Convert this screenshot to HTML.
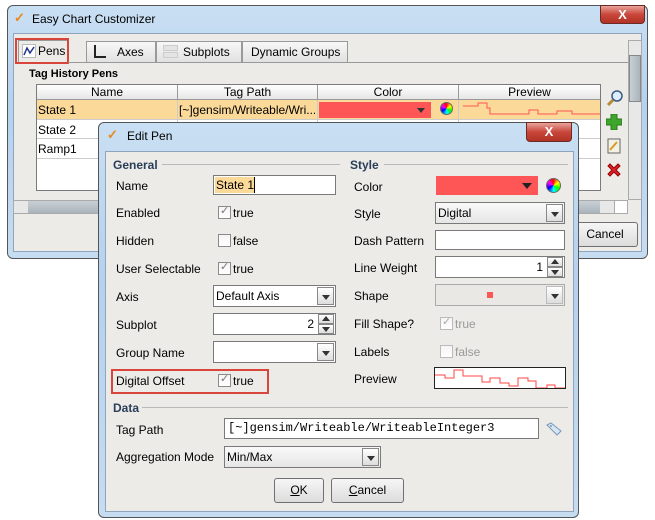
<!DOCTYPE html>
<html><head><style>
*{box-sizing:border-box;margin:0;padding:0}
body{width:655px;height:520px;background:#fff;position:relative;overflow:hidden;font-family:"Liberation Sans",sans-serif;font-size:12px;color:#000}
.a{position:absolute;white-space:nowrap}
.win{background:linear-gradient(#c9dff3,#b5d1ee 40%,#c6dcf1);border:1px solid #555;border-radius:6px}
.panel{background:#ecebe7;border:1px solid #8ea5bd}
.close{background:linear-gradient(#e8a39a,#c9463a 50%,#b13226);border:1px solid #6b2a22;border-radius:0 0 4px 4px;color:#fff;font-weight:bold;text-align:center;font-size:13px;line-height:17px}
.fld{background:#fff;border:1px solid #7a7a7a}
.cmb{background:linear-gradient(#fafafa,#e6e6e6);border:1px solid #7a7a7a}
.arr{position:absolute;right:1px;top:1px;bottom:1px;width:17px;border:1px solid #888;background:linear-gradient(#fff,#ddd)}
.arr:after{content:"";position:absolute;left:4px;top:7px;border:4px solid transparent;border-top:5px solid #333}
.cb{width:13px;height:13px;border:1px solid #8a8a8a;background:linear-gradient(#f4f4f4,#fff)}
.sec{color:#2a3e5a;font-weight:bold;font-size:12px}
.ln{height:1px;background:#b9b9b9}
.btn{border:1px solid #707070;border-radius:3px;background:linear-gradient(#f6f6f6,#dcdcdc);text-align:center;line-height:23px;font-size:12px}
.tab{border:1px solid #999;border-bottom:none;background:linear-gradient(#f7f7f7,#e0e0e0);height:22px;line-height:21px;font-size:12px}
.sp{position:absolute;right:1px;width:16px;height:10px;border:1px solid #888;background:linear-gradient(#fff,#ddd)}
.up:after{content:"";position:absolute;left:3px;top:1px;border:4px solid transparent;border-bottom:5px solid #333;border-top:0}
.dn:after{content:"";position:absolute;left:3px;top:2px;border:4px solid transparent;border-top:5px solid #333;border-bottom:0}
</style></head><body>

<!-- outer window -->
<div class="a win" style="left:7px;top:5px;width:641px;height:254px"></div>
<div class="a" style="left:14px;top:10px;color:#e8891c;font-weight:bold;font-size:13px">✓</div>
<div class="a" style="left:32px;top:12px;font-size:12px">Easy Chart Customizer</div>
<div class="a close" style="left:600px;top:5px;width:45px;height:19px">X</div>
<div class="a" style="left:13px;top:33px;width:629px;height:219px;background:#ecebe7;border:1px solid #8ea5bd"></div>
<!-- tabs -->
<div class="a tab" style="left:86px;top:41px;width:70px;padding-left:30px">Axes</div>
<div class="a" style="left:94px;top:45px;width:12px;height:13px;border-left:2px solid #222;border-bottom:2px solid #222"></div>
<div class="a tab" style="left:156px;top:41px;width:86px;padding-left:26px">Subplots</div>
<div class="a" style="left:163px;top:45px;width:15px;height:6px;background:#e4e4e4;border:1px solid #ccc"></div>
<div class="a" style="left:163px;top:52px;width:15px;height:6px;background:#e4e4e4;border:1px solid #ccc"></div>
<div class="a tab" style="left:242px;top:41px;width:106px;padding-left:8px">Dynamic Groups</div>
<div class="a tab" style="left:18px;top:40px;width:50px;height:23px;background:#ecebe7;padding-left:19px">Pens</div>
<svg class="a" style="left:22px;top:44px" width="14" height="14"><rect x="0.5" y="0.5" width="13" height="13" fill="#fff" stroke="#bbb"/><path d="M2 11 L5 4 L8 9 L12 3" stroke="#223388" stroke-width="1.5" fill="none"/></svg>
<div class="a" style="left:15px;top:38px;width:54px;height:26px;border:2px solid #d9453a"></div>
<div class="a" style="left:68px;top:62px;width:560px;height:1px;background:#999"></div>
<div class="a" style="left:29px;top:68px;font-weight:bold;font-size:11px">Tag History Pens</div>
<!-- table -->
<div class="a fld" style="left:36px;top:84px;width:565px;height:107px"></div>
<div class="a" style="left:37px;top:85px;width:563px;height:15px;background:linear-gradient(#fff,#e6e6e6);border-bottom:1px solid #999"></div>
<div class="a" style="left:37px;top:85px;width:140px;text-align:center">Name</div>
<div class="a" style="left:177px;top:85px;width:140px;text-align:center;border-left:1px solid #999;height:15px">Tag Path</div>
<div class="a" style="left:317px;top:85px;width:141px;text-align:center;border-left:1px solid #999;height:15px">Color</div>
<div class="a" style="left:458px;top:85px;width:142px;text-align:center;border-left:1px solid #999;height:15px">Preview</div>
<div class="a" style="left:37px;top:100px;width:563px;height:19px;background:#fbd999"></div>
<div class="a" style="left:177px;top:100px;width:1px;height:58px;background:#ccc"></div>
<div class="a" style="left:317px;top:100px;width:1px;height:58px;background:#ccc"></div>
<div class="a" style="left:458px;top:100px;width:1px;height:58px;background:#ccc"></div>
<div class="a" style="left:37px;top:119px;width:563px;height:1px;background:#ccc"></div>
<div class="a" style="left:37px;top:138px;width:563px;height:1px;background:#ccc"></div>
<div class="a" style="left:37px;top:158px;width:563px;height:1px;background:#ccc"></div>
<div class="a" style="left:38px;top:103px">State 1</div>
<div class="a" style="left:38px;top:123px">State 2</div>
<div class="a" style="left:38px;top:142px">Ramp1</div>
<div class="a" style="left:179px;top:103px;font-size:12px;width:136px;overflow:hidden">[~]gensim/Writeable/Wri...</div>
<div class="a" style="left:319px;top:102px;width:112px;height:16px;background:#fe5656"></div>
<div class="a" style="left:417px;top:108px;border:4px solid transparent;border-top:5px solid #333"></div>
<div class="a" style="left:440px;top:102px;width:13px;height:13px;border-radius:50%;background:conic-gradient(red,yellow,lime,cyan,blue,magenta,red);border:1px solid #666"></div>
<svg class="a" style="left:459px;top:100px" width="141" height="19"><path d="M4 6 H19 V3 H28 V8 H31 V14 H70 V10 H79 V14 H98 V11 H113 V14 H141" stroke="#f55" fill="none"/></svg>
<!-- right tool icons -->
<svg class="a" style="left:606px;top:89px" width="18" height="18"><circle cx="11" cy="7" r="5" fill="#dfeeff" stroke="#3a5a82" stroke-width="1.5"/><path d="M7 11 L2 16" stroke="#b88a3a" stroke-width="3"/></svg>
<svg class="a" style="left:606px;top:114px" width="16" height="16"><path d="M5 0h6v5h5v6h-5v5h-6v-5h-5v-6h5z" fill="#3fa52c" stroke="#2a7a1a"/></svg>
<svg class="a" style="left:606px;top:138px" width="16" height="16"><rect x="2" y="1" width="12" height="14" fill="#f2f2e4" stroke="#666"/><path d="M4 12 L11 4" stroke="#d89a2a" stroke-width="2"/></svg>
<svg class="a" style="left:606px;top:162px" width="16" height="16"><path d="M2 4 L4 2 L8 6 L12 2 L14 4 L10 8 L14 12 L12 14 L8 10 L4 14 L2 12 L6 8z" fill="#d8232a" stroke="#900"/></svg>
<!-- scrollbars -->
<div class="a" style="left:628px;top:40px;width:14px;height:160px;background:#e8e8e8;border:1px solid #aaa"></div>
<div class="a" style="left:629px;top:55px;width:12px;height:47px;background:linear-gradient(90deg,#c8d0d6,#aab4bb);border:1px solid #888"></div>
<div class="a" style="left:13px;top:200px;width:615px;height:14px;background:#e8e8e8;border:1px solid #aaa"></div>
<div class="a" style="left:28px;top:201px;width:572px;height:12px;background:linear-gradient(#c8d0d6,#aab4bb)"></div>
<div class="a" style="left:614px;top:200px;width:14px;height:14px;border:1px solid #aaa;background:#fff"></div>
<div class="a btn" style="left:560px;top:222px;width:78px;height:25px;padding-left:12px">Cancel</div>

<!-- Edit Pen dialog -->
<div class="a win" style="left:98px;top:122px;width:481px;height:396px"></div>
<div class="a" style="left:107px;top:127px;color:#e8891c;font-weight:bold;font-size:13px">✓</div>
<div class="a" style="left:127px;top:129px;font-size:12px">Edit Pen</div>
<div class="a close" style="left:526px;top:122px;width:46px;height:20px">X</div>
<div class="a panel" style="left:105px;top:151px;width:469px;height:361px"></div>

<div class="a sec" style="left:113px;top:158px">General</div>
<div class="a ln" style="left:162px;top:164px;width:178px"></div>
<div class="a sec" style="left:350px;top:158px">Style</div>
<div class="a ln" style="left:384px;top:164px;width:184px"></div>

<div class="a" style="left:116px;top:179px">Name</div>
<div class="a fld" style="left:213px;top:175px;width:123px;height:20px"></div>
<div class="a" style="left:215px;top:177px;height:16px;width:40px;background:#fbd999;padding-left:1px;line-height:16px;border-right:1px solid #000">State 1</div>
<div class="a" style="left:116px;top:206px">Enabled</div>
<div class="a cb" style="left:218px;top:206px"><span style="position:absolute;left:1px;top:-3px;color:#777;font-size:11px">✓</span></div>
<div class="a" style="left:233px;top:206px">true</div>
<div class="a" style="left:116px;top:234px">Hidden</div>
<div class="a cb" style="left:218px;top:234px"></div>
<div class="a" style="left:233px;top:234px">false</div>
<div class="a" style="left:116px;top:262px">User Selectable</div>
<div class="a cb" style="left:218px;top:262px"><span style="position:absolute;left:1px;top:-3px;color:#777;font-size:11px">✓</span></div>
<div class="a" style="left:233px;top:262px">true</div>
<div class="a" style="left:116px;top:290px">Axis</div>
<div class="a cmb" style="left:213px;top:285px;width:123px;height:22px;background:#fff"><span style="position:absolute;left:2px;top:3px">Default Axis</span><div class="arr"></div></div>
<div class="a" style="left:116px;top:318px">Subplot</div>
<div class="a fld" style="left:213px;top:313px;width:123px;height:22px"><span style="position:absolute;right:21px;top:3px">2</span><div class="sp up" style="top:0"></div><div class="sp dn" style="top:10px"></div></div>
<div class="a" style="left:116px;top:346px">Group Name</div>
<div class="a cmb" style="left:213px;top:341px;width:123px;height:22px;background:#fff"><div class="arr"></div></div>
<div class="a" style="left:116px;top:374px">Digital Offset</div>
<div class="a cb" style="left:218px;top:374px"><span style="position:absolute;left:1px;top:-3px;color:#777;font-size:11px">✓</span></div>
<div class="a" style="left:233px;top:374px">true</div>
<div class="a" style="left:111px;top:369px;width:158px;height:25px;border:2px solid #d9453a"></div>

<div class="a" style="left:354px;top:180px">Color</div>
<div class="a" style="left:436px;top:176px;width:102px;height:19px;background:#fe5656"></div>
<div class="a" style="left:522px;top:183px;border:5px solid transparent;border-top:6px solid #222"></div>
<div class="a" style="left:546px;top:178px;width:15px;height:15px;border-radius:50%;background:conic-gradient(red,yellow,lime,cyan,blue,magenta,red);border:1px solid #666"></div>
<div class="a" style="left:354px;top:207px">Style</div>
<div class="a cmb" style="left:435px;top:202px;width:130px;height:22px"><span style="position:absolute;left:2px;top:3px">Digital</span><div class="arr"></div></div>
<div class="a" style="left:354px;top:234px">Dash Pattern</div>
<div class="a fld" style="left:435px;top:230px;width:130px;height:20px"></div>
<div class="a" style="left:354px;top:261px">Line Weight</div>
<div class="a fld" style="left:435px;top:256px;width:130px;height:22px"><span style="position:absolute;right:21px;top:3px">1</span><div class="sp up" style="top:0"></div><div class="sp dn" style="top:10px"></div></div>
<div class="a" style="left:354px;top:289px">Shape</div>
<div class="a" style="left:435px;top:284px;width:130px;height:22px;border:1px solid #aaa;background:#e9e8e4"><div class="a" style="left:51px;top:7px;width:6px;height:6px;background:#fe5656"></div><div class="arr" style="border-color:#bbb"></div></div>
<div class="a" style="left:354px;top:317px">Fill Shape?</div>
<div class="a cb" style="left:440px;top:317px;border-color:#bbb"><span style="position:absolute;left:1px;top:-3px;color:#aaa;font-size:11px">✓</span></div>
<div class="a" style="left:455px;top:317px;color:#999">true</div>
<div class="a" style="left:354px;top:345px">Labels</div>
<div class="a cb" style="left:440px;top:345px;border-color:#bbb"></div>
<div class="a" style="left:455px;top:345px;color:#999">false</div>
<div class="a" style="left:354px;top:372px">Preview</div>
<div class="a" style="left:434px;top:367px;width:132px;height:22px;background:#fff;border:1px solid #222"></div>
<svg class="a" style="left:435px;top:368px" width="130" height="20"><path d="M0 7 H10 V10 H19 V2 H28 V8 H47 V14 H55 V10 H65 V15 H74 V18 H83 V10 H93 V13 H101 V20 H112 V17 H120 V20 H130" stroke="#f44" fill="none"/></svg>

<div class="a sec" style="left:113px;top:401px">Data</div>
<div class="a ln" style="left:142px;top:407px;width:426px"></div>
<div class="a" style="left:116px;top:423px">Tag Path</div>
<div class="a fld" style="left:224px;top:418px;width:315px;height:21px;font-family:'Liberation Mono',monospace;font-size:12px;padding:2px 3px">[~]gensim/Writeable/WriteableInteger3</div>
<svg class="a" style="left:546px;top:422px" width="16" height="14"><path d="M1 3 L5 1 L15 9 L11 13 Z" fill="#d5e6f5" stroke="#7a9ab8"/><circle cx="5" cy="4" r="1" fill="#7a9ab8"/></svg>
<div class="a" style="left:116px;top:450px">Aggregation Mode</div>
<div class="a cmb" style="left:224px;top:446px;width:157px;height:22px"><span style="position:absolute;left:2px;top:3px">Min/Max</span><div class="arr"></div></div>
<div class="a btn" style="left:274px;top:478px;width:50px;height:25px"><u>O</u>K</div>
<div class="a btn" style="left:331px;top:478px;width:73px;height:25px"><u>C</u>ancel</div>
</body></html>
